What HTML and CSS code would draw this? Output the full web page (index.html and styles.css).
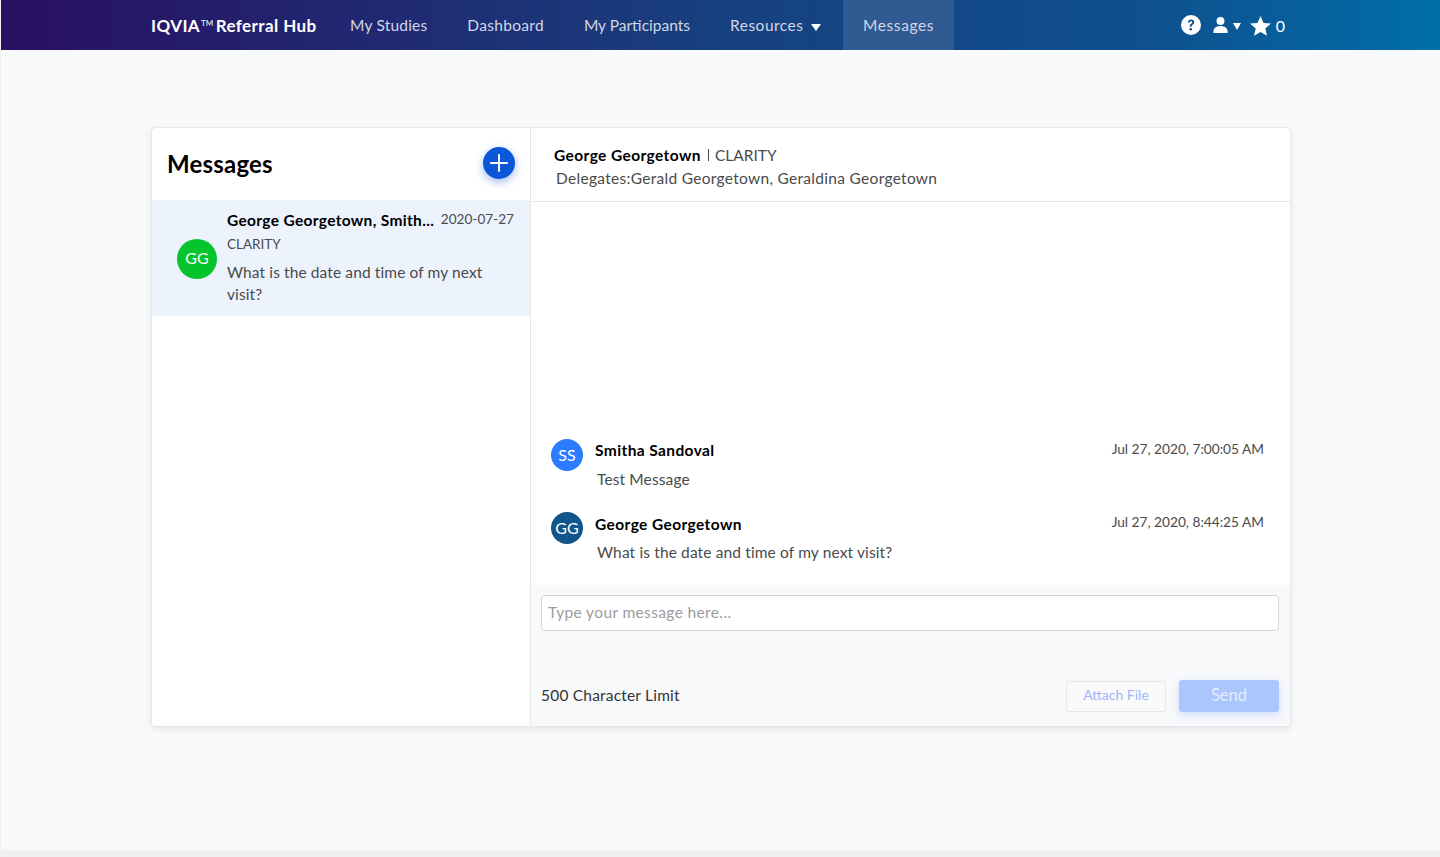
FILE: index.html
```html
<!DOCTYPE html>
<html lang="en">
<head>
    <meta charset="UTF-8">
    <title>Messages</title>
    <link rel="stylesheet" href="styles.css">
</head>
<body>

    <div class="page">
        <nav class="navbar">
            <div class="brand">IQVIA<span class="tm">TM</span> Referral Hub</div>
            <a class="nav-link">My Studies</a>
            <a class="nav-link dashboard">Dashboard</a>
            <a class="nav-link participants">My Participants</a>
            <a class="nav-link resources">Resources <span class="caret"></span></a>
            <a class="nav-link active">Messages</a>
            <div class="nav-icons">
                <svg class="icon-help" width="20" height="20" viewBox="0 0 20 20">
                    <circle cx="10" cy="10" r="10" fill="#fff"/>
                    <path d="M6.9 7.6C7 5.7 8.3 4.6 10.1 4.6c1.800 0 3.100 1.100 3.100 2.700 0 1.200-.6 1.900-1.600 2.500-.8.500-1 .8-1 1.600v.4H8.700v-.6c0-1.200.4-1.800 1.400-2.400.8-.5 1.100-.9 1.100-1.400 0-.6-.5-1.100-1.200-1.100-.7 0-1.200.5-1.300 1.300z" fill="#10508f"/>
                    <circle cx="9.700" cy="14.300" r="1.300" fill="#10508f"/>
                </svg>
                <svg class="icon-user" width="15" height="16" viewBox="0 0 15 17">
                    <circle cx="7.500" cy="4.200" r="4.200" fill="#fff"/>
                    <path d="M0 17v-1.500C0 11.800 3 9.600 7.500 9.600s7.500 2.200 7.500 5.900V17z" fill="#fff"/>
                </svg>
                <span class="caret small"></span>
                <svg class="icon-star" width="21" height="20" viewBox="0 0 21 20">
                    <path d="M10.500 0l3 6.900 7.500.7-5.700 4.900 1.700 7.300-6.500-3.900L4 19.800l1.700-7.300L0 7.600l7.500-.7z" fill="#fff"/>
                </svg>
                <span class="star-count">0</span>
            </div>
        </nav>

        <main class="content">
            <div class="card">
                <aside class="sidebar">
                    <div class="sidebar-head">
                        <h2>Messages</h2>
                        <button class="add-btn">
                            <svg width="18" height="18" viewBox="0 0 18 18">
                                <path d="M9 1v16M1 9h16" stroke="#fff" stroke-width="2" stroke-linecap="round"/>
                            </svg>
                        </button>
                    </div>
                    <div class="thread">
                        <div class="avatar green">GG</div>
                        <div class="thread-body">
                            <div class="thread-top">
                                <b>George Georgetown, Smith...</b>
                                <span>2020-07-27</span>
                            </div>
                            <div class="thread-study">CLARITY</div>
                            <p>What is the date and time of my next visit?</p>
                        </div>
                    </div>
                </aside>

                <section class="chat">
                    <div class="chat-head">
                        <div class="chat-title"><b>George Georgetown</b><span class="study">CLARITY</span></div>
                        <div class="delegates">Delegates:Gerald Georgetown, Geraldina Georgetown</div>
                    </div>

                    <div class="chat-list">
                        <div class="msg">
                            <div class="avatar small blue">SS</div>
                            <div class="msg-body">
                                <div class="msg-top">
                                    <b>Smitha Sandoval</b>
                                    <span>Jul 27, 2020, 7:00:05 AM</span>
                                </div>
                                <p>Test Message</p>
                            </div>
                        </div>
                        <div class="msg">
                            <div class="avatar small navy">GG</div>
                            <div class="msg-body">
                                <div class="msg-top">
                                    <b>George Georgetown</b>
                                    <span>Jul 27, 2020, 8:44:25 AM</span>
                                </div>
                                <p>What is the date and time of my next visit?</p>
                            </div>
                        </div>
                    </div>

                    <div class="composer">
                        <input type="text" placeholder="Type your message here...">
                        <div class="composer-foot">
                            <span class="limit">500 Character Limit</span>
                            <button class="btn-attach">Attach File</button>
                            <button class="btn-send">Send</button>
                        </div>
                    </div>
                </section>
            </div>
        </main>
    </div>

</body>
</html>
```

FILE: styles.css
```css
html, body {
    height: 100%;
}
body {
    margin: 0;
    background-color: #f0f0f0;
    font-family: Lato, "Open Sans", sans-serif;
    color: #4a4a4a;
    overflow: hidden;
}
.page {
    margin-left: 1px;
    height: 850px;
    background-color: #f8f9fb;
}

/* top bar */
.navbar {
    height: 50px;
    padding-left: 150px;
    display: flex;
    align-items: center;
    background: linear-gradient(90deg, #2a0f63 0%, #17407f 50%, #0f508f 80%, #006ea8 100%);
    box-sizing: border-box;
}
.brand {
    width: 179px;
    color: #fff;
    font-size: 17px;
    font-weight: 700;
    letter-spacing: 0.4px;
    white-space: nowrap;
}
.tm {
    font-size: 8px;
    font-weight: 400;
    letter-spacing: 0;
    vertical-align: 6px;
    margin: 0 -2px 0 1px;
}
.nav-link {
    height: 50px;
    line-height: 50px;
    padding: 0 20px;
    color: #d3d7e6;
    font-size: 15.500px;
    letter-spacing: 0.2px;
    white-space: nowrap;
}
.nav-link.dashboard {
    letter-spacing: 0.3px;
}
.nav-link.participants {
    letter-spacing: 0;
}
.nav-link.resources {
    margin-right: 2px;
    letter-spacing: 0.5px;
}
.nav-link.active {
    background-color: #2f5a92;
    letter-spacing: 0.6px;
}
.caret {
    display: inline-block;
    margin-left: 3px;
    border-left: 5px solid transparent;
    border-right: 5px solid transparent;
    border-top: 7px solid #fff;
    vertical-align: 0;
}
.caret.small {
    margin: 3px 0 0 5px;
    border-left-width: 4px;
    border-right-width: 4px;
}
.nav-icons {
    margin-left: auto;
    margin-right: 155px;
    display: flex;
    align-items: center;
}
.icon-user {
    margin-left: 12px;
}
.icon-star {
    margin: 2px 0 0 9px;
}
.star-count {
    margin-left: 5px;
    color: #fff;
    font-size: 16px;
}

/* card */
.content {
    padding: 77px 149px 0 150px;
}
.card {
    height: 600px;
    display: flex;
    background: #fff;
    border: 1px solid #e6e7ea;
    border-radius: 4px;
    box-sizing: border-box;
    box-shadow: 0 2px 6px rgba(0, 0, 0, 0.08);
    overflow: hidden;
}
.sidebar {
    width: 379px;
    flex-shrink: 0;
    border-right: 1px solid #e6e7ea;
    box-sizing: border-box;
}
.sidebar-head {
    height: 72px;
    padding: 0 15px;
    display: flex;
    align-items: center;
    justify-content: space-between;
}
.sidebar-head h2 {
    margin: 0 0 2px;
    color: #000;
    font-size: 24px;
    font-weight: 700;
    letter-spacing: 0.2px;
}
.add-btn {
    width: 32px;
    height: 32px;
    margin-top: -2px;
    padding: 0;
    border: none;
    border-radius: 50%;
    background-color: #0c57d8;
    box-shadow: 0 3px 8px rgba(12, 87, 216, 0.4);
    display: flex;
    align-items: center;
    justify-content: center;
}
.avatar {
    padding-bottom: 2px;
    border-radius: 50%;
    box-sizing: border-box;
    color: #fff;
    display: flex;
    align-items: center;
    justify-content: center;
    flex-shrink: 0;
}
.avatar.green {
    width: 40px;
    height: 40px;
    margin-top: 2px;
    padding-bottom: 4px;
    background-color: #06c42c;
    font-size: 16px;
}
.avatar.small {
    width: 32px;
    height: 32px;
    font-size: 16px;
}
.avatar.blue {
    background-color: #2c7cff;
}
.avatar.navy {
    background-color: #10558c;
}
.thread {
    height: 116px;
    padding: 0 16px 0 25px;
    display: flex;
    align-items: center;
    background-color: #edf3fd;
}
.thread-body {
    align-self: flex-start;
    margin-left: 10px;
    padding-top: 11px;
    flex: 1;
}
.thread-top {
    display: flex;
    justify-content: space-between;
    font-size: 13.600px;
}
.thread-top b {
    color: #000;
    font-size: 15.500px;
    letter-spacing: 0.33px;
}
.thread-study {
    margin-top: 7px;
    font-size: 13.500px;
}
.thread-body p {
    margin: 9px 0 0;
    font-size: 15.500px;
    line-height: 22px;
    letter-spacing: 0.11px;
}

/* conversation */
.chat {
    flex: 1;
    display: flex;
    flex-direction: column;
    min-width: 0;
}
.chat-head {
    height: 74px;
    padding: 17px 23px 0;
    border-bottom: 1px solid #e6e7ea;
    box-sizing: border-box;
}
.chat-title b {
    color: #000;
    font-size: 15.500px;
    letter-spacing: 0.4px;
}
.chat-title .study {
    margin-left: 7px;
    padding-left: 7px;
    font-size: 15.500px;
    background: linear-gradient(#4a4a4a, #4a4a4a) left center / 1px 12px no-repeat;
}
.delegates {
    margin-top: 5px;
    margin-left: 2px;
    font-size: 15.500px;
    letter-spacing: 0.3px;
}
.chat-list {
    flex: 1;
    padding: 0 26px 22px 20px;
    display: flex;
    flex-direction: column;
    justify-content: flex-end;
    gap: 22px;
}
.msg {
    display: flex;
}
.msg-body {
    flex: 1;
    margin-left: 12px;
}
.msg-top {
    display: flex;
    justify-content: space-between;
    align-items: flex-start;
    font-size: 13.700px;
    line-height: 20px;
}
.msg-top b {
    color: #000;
    font-size: 15.500px;
    line-height: 22px;
    letter-spacing: 0.4px;
}
.msg + .msg .msg-top b {
    padding-top: 1px;
}
.msg-body p {
    margin: 7px 0 0 2px;
    font-size: 15.500px;
    line-height: 22px;
    letter-spacing: 0.13px;
}
.msg + .msg .msg-body p {
    margin-top: 6px;
}
.composer {
    height: 141px;
    padding: 10px 11px 14px 10px;
    background-color: #f8f9fb;
    box-sizing: border-box;
    display: flex;
    flex-direction: column;
    justify-content: space-between;
}
.composer input {
    height: 36px;
    padding: 0 6px 2px;
    border: 1px solid #d5d6da;
    border-radius: 4px;
    background: #fff;
    font-family: inherit;
    font-size: 15.500px;
    letter-spacing: 0.37px;
    box-sizing: border-box;
}
.composer input::placeholder {
    color: #9b9b9b;
}
.composer-foot {
    display: flex;
    align-items: center;
}
.limit {
    margin-right: auto;
    padding-bottom: 2px;
    color: #333;
    font-size: 15.500px;
    letter-spacing: 0.2px;
}
.btn-attach {
    width: 100px;
    height: 31px;
    padding: 0 0 3px;
    border: 1px solid #e6e7ea;
    border-radius: 3px;
    background: #fafafa;
    color: #9ab6fb;
    font-family: inherit;
    font-size: 14px;
}
.btn-send {
    width: 100px;
    height: 32px;
    margin-left: 13px;
    padding: 0 0 3px;
    border: none;
    border-radius: 3px;
    background-color: #aac6fd;
    box-shadow: 0 3px 8px rgba(120, 160, 250, 0.3);
    color: #e4ecff;
    font-family: inherit;
    font-size: 16.500px;
}
```
